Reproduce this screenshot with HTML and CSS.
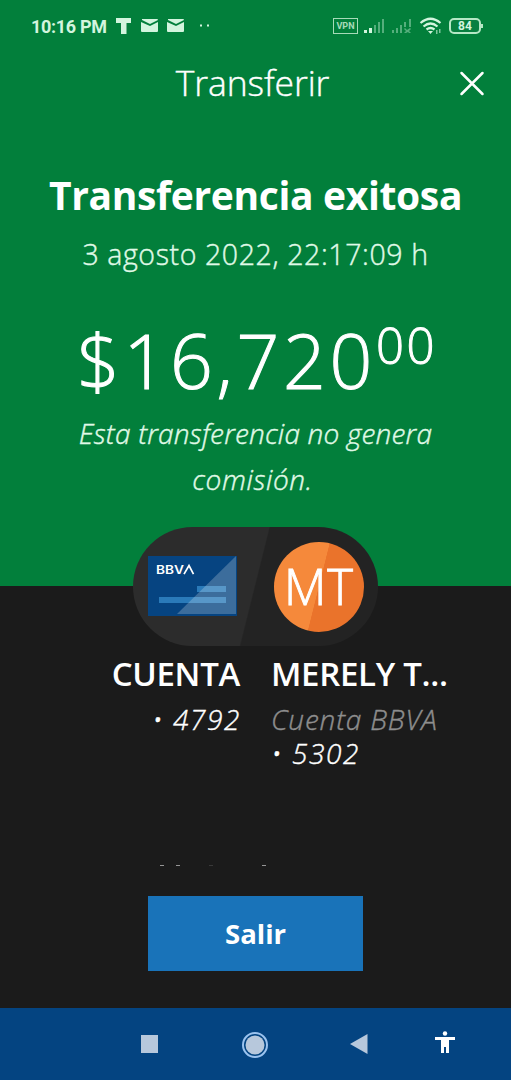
FILE: index.html
```html
<!DOCTYPE html>
<html lang="es">
<head>
<meta charset="utf-8">
<title>Transferir</title>
<link rel="stylesheet" href="styles.css">
</head>
<body>
<main class="screen">
  <section class="hero">
    <div class="status">
      <span class="clock">10:16 PM</span>
      <svg class="notices" width="100" height="20" viewBox="0 0 100 20">
        <path d="M0 2H15V7H10.500V18H5V7H0Z"/>
        <path d="M26 3H41Q42 3 42 4L34 8L26 4ZM25 6L34 10L42 6V15Q42 16 41 16H26Q25 16 25 15Z"/>
        <path d="M52 3H67Q68 3 68 4L60 8L52 4ZM51 6L60 10L68 6V15Q68 16 67 16H52Q51 16 51 15Z"/>
        <path d="M84 8.500h2v2h-2zM91 8.500h2v2h-2z"/>
      </svg>
      <span class="vpn">VPN</span>
      <svg class="signals" width="85" height="20" viewBox="0 0 85 20">
        <path d="M2 14h3v3H2zM7 12h3v5H7z"/>
        <path opacity=".4" d="M12 9h2v8h-2zM16 6h2v11h-2zM20 3h2v14h-2z"/>
        <path opacity=".4" d="M30 14h2v3h-2zM34 12h2v5h-2zM38 9h2v8h-2zM42 6h2v5h-2zM47 3h2v8h-2zM43 12l2 2 3-2 1 1-2 2 2 2h-2l-1-1-2 1h-2l2-2-2-2z"/>
        <path class="wifi" d="M58.500 7Q68.500-1.500 78.500 7M61.500 10.500Q68.500 4.500 75.500 10.500M64.500 13.500Q68.500 10.500 72.500 13.500"/>
        <path d="M66 15h5l-2.500 3z"/>
        <path opacity=".6" d="M74 14h1.500v4H74zM77 13h1.500v4H77z"/>
      </svg>
      <span class="battery">84</span>
    </div>
    <header class="top">
      <h1>Transferir</h1>
      <svg class="close" width="26" height="26" viewBox="0 0 26 26"><path d="M2.500 2 23.500 23M23.500 2 2.500 23"/></svg>
    </header>
    <h2>Transferencia exitosa</h2>
    <p class="date">3 agosto 2022, 22:17:09 h</p>
    <p class="amount"><span class="whole">$16,720</span><span class="cents">00</span></p>
    <p class="note">Esta transferencia no genera<br><span class="last">comisión.</span></p>
  </section>
  <section class="details">
    <div class="pill">
      <svg class="card" width="89" height="60" viewBox="0 0 89 60">
        <path fill="#064481" d="M0 0h89v60H0z"/>
        <path fill="#2a7ab9" d="M11 41h67v6H11zM49 30h29v6H49z"/>
        <path fill="#fff" fill-opacity=".22" d="M88 0V58H29z"/>
        <text class="brand" x="8" y="18" textLength="28" lengthAdjust="spacingAndGlyphs">BBV</text>
        <path class="brand-a" d="M36 18.200 41 9.500 45.500 18.200"/>
      </svg>
      <span class="avatar">MT</span>
    </div>
    <div class="parties">
      <div class="from"><strong>CUENTA</strong><em>• 4792</em></div>
      <div class="to"><strong>MERELY T...</strong><em class="bank">Cuenta BBVA</em><em>• 5302</em></div>
    </div>
    <div class="clipped"><i></i><i></i><i></i><i></i></div>
    <button class="exit">Salir</button>
  </section>
  <nav class="nav">
    <svg width="511" height="72" viewBox="0 0 511 72">
      <path fill="#b7c8dc" d="M141 27h17v18h-17z"/>
      <circle cx="255" cy="37" r="12" fill="none" stroke="#9bc3ef" stroke-width="2"/>
      <circle cx="255" cy="37" r="9.500" fill="#b7c8dc"/>
      <path fill="#b7c8dc" d="M350 36 367.500 26V46z"/>
      <path fill="#fff" d="M435 29h20v3h-6v13h-3v-6h-2v6h-3V32h-6z"/>
      <circle cx="445" cy="25.500" r="2.200" fill="#fff"/>
    </svg>
  </nav>
</main>
</body>
</html>
```
FILE: styles.css
```css
* { box-sizing: border-box; margin: 0; padding: 0; }
body { background: #1b1b1b; color: #fff; font-family: "Open Sans", "Noto Sans", sans-serif; }
.screen { width: 511px; height: 1080px; display: flex; flex-direction: column; overflow: hidden; }
.hero { height: 586px; background: #027f3b; text-align: center; font-weight: 300; white-space: nowrap; }
.status { height: 52px; display: flex; align-items: center; padding: 0 30px 0 31px; color: #d3f5de; fill: #d3f5de; }
.clock { font: 700 18px Roboto, sans-serif; letter-spacing: -.3px; width: 75px; }
.notices { margin-left: 10px; }
.vpn { margin-left: auto; width: 25px; height: 16px; border: 1.500px solid #a7dbb8; font: 700 9px/14px Roboto, sans-serif; color: #a7dbb8; }
.signals { margin-left: 4px; }
.wifi { fill: none; stroke: #d3f5de; stroke-width: 2.200; }
.battery { position: relative; width: 32px; height: 16px; margin-left: 2px; border: 2px solid #b5e7c5; border-radius: 5px; background: #087f40; font: 700 12px/12px Roboto, sans-serif; }
.battery::after { content: ""; position: absolute; left: 30px; top: 4px; width: 2px; height: 4px; background: #b5e7c5; }
.signals, .vpn, .battery { flex: none; }
.top { height: 64px; display: grid; grid-template-columns: 1fr 154px 1fr; align-items: center; }
h1 { grid-column: 2; margin: -3px 0 0 -6px; font-size: 35.500px; line-height: 61px; font-weight: 300; letter-spacing: -.1px; -webkit-text-stroke: .4px; }
.close { justify-self: end; margin-right: 26px; fill: none; stroke: #fff; stroke-width: 2.500; stroke-linecap: round; }
h2 { margin-top: 49px; font-size: 39px; line-height: 60px; font-weight: 700; letter-spacing: -.35px; }
.date { margin-top: 9px; font-size: 28.500px; line-height: 40px; letter-spacing: .6px; color: #e0fae8; -webkit-text-stroke: .4px; }
.amount { display: flex; justify-content: center; align-items: flex-start; height: 104px; margin-top: 35px; padding-left: 3px; -webkit-text-stroke: 1px; }
.whole { font-size: 75px; line-height: 102px; letter-spacing: 3.700px; }
.cents { font-size: 49px; line-height: 66px; letter-spacing: 2.500px; margin-top: 3px; }
.note { margin-top: -3px; font-size: 28px; line-height: 46px; letter-spacing: .2px; font-style: italic; color: #e0fae8; -webkit-text-stroke: .4px; }
.last { padding-right: 6px; letter-spacing: .6px; }
.details { display: flex; flex-direction: column; align-items: center; margin-top: -59px; z-index: 1; flex: 1; }
.pill { width: 245px; height: 119px; border-radius: 60px; background: linear-gradient(104deg, #2c2c2c 49.500%, #232323 50%); display: flex; align-items: center; padding: 0 14px 0 15px; justify-content: space-between; flex: none; }
.card { margin-top: -1px; }
.brand { font: 600 12px Inter, sans-serif; fill: #fff; }
.brand-a { fill: none; stroke: #fff; stroke-width: 1.700; }
.avatar { width: 90px; height: 90px; border-radius: 50%; background: linear-gradient(104deg, #f5893b 49.500%, #ea732b 50%); font-size: 49px; line-height: 88px; text-align: center; font-weight: 300; letter-spacing: 1px; -webkit-text-stroke: .9px; }
.parties { display: grid; grid-template-columns: 241px 240px; column-gap: 30px; width: 511px; height: 219px; padding-top: 6px; white-space: nowrap; }
.parties strong { display: block; font-size: 33px; line-height: 44px; font-weight: 600; letter-spacing: -.3px; }
.from strong { padding-right: 1px; }
.parties em { display: block; font-size: 28px; line-height: 34px; font-weight: 300; letter-spacing: 1.600px; -webkit-text-stroke: .4px; }
.parties strong + em { margin-top: 6px; }
.from { text-align: right; }
.parties .bank { letter-spacing: .8px; color: #8e8e8e; }
.clipped { width: 511px; height: 2px; padding-left: 160px; display: flex; gap: 12px; }
.clipped i { width: 4px; height: 1px; background: #969696; }
.clipped i:nth-child(3) { margin-left: 17px; background: #393939; }
.clipped i:nth-child(4) { margin-left: 37px; }
.exit { width: 215px; height: 75px; margin-top: 29px; border: 0; background: #1973b9; color: #fff; font: 700 27.500px/73px "Open Sans", sans-serif; }
.nav { height: 72px; flex: none; background: #044481; }
.nav svg { display: block; }
```
